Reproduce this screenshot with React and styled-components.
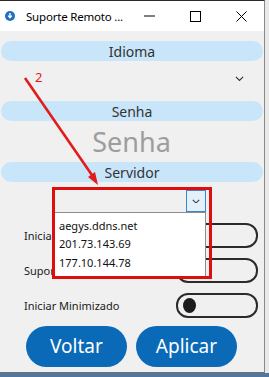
import styled, { createGlobalStyle } from "styled-components";

const GlobalStyle = createGlobalStyle`
  html, body {
    margin: 0;
    padding: 0;
    background: #dcdcdc;
  }
  * {
    box-sizing: border-box;
  }
`;

const servers = ["aegys.ddns.net", "201.73.143.69", "177.10.144.78"];

const toggles = [
  { label: "Iniciar com o Windows" },
  { label: "Suporte Rápido" },
  { label: "Iniciar Minimizado" },
];

function Chevron({ size = 9 }) {
  return (
    <svg width={size} height={size * 0.6} viewBox="0 0 10 6">
      <path d="M1 1 L5 5 L9 1" fill="none" stroke="#333" strokeWidth="1.3" />
    </svg>
  );
}

export default function App() {
  return (
    <>
      <GlobalStyle />
      <Screen>
        <Desktop>
          <Window>
            <TitleBar>
              <AppIcon>
                <svg width="10" height="10" viewBox="0 0 10 10">
                  <circle cx="5" cy="5" r="5" fill="#1f6fc2" />
                  <path d="M5 2 V6.2 M3.2 4.6 L5 6.6 L6.8 4.6" stroke="#fff" strokeWidth="1.4" fill="none" />
                </svg>
              </AppIcon>
              <Title>Suporte Remoto ...</Title>
              <WindowButtons>
                <CaptionButton>
                  <svg width="11" height="10" viewBox="0 0 11 10">
                    <path d="M0 5 H11" stroke="#000" strokeWidth="1" />
                  </svg>
                </CaptionButton>
                <CaptionButton>
                  <svg width="11" height="11" viewBox="0 0 11 11">
                    <rect x="0.5" y="0.5" width="10" height="10" fill="none" stroke="#000" strokeWidth="1" />
                  </svg>
                </CaptionButton>
                <CaptionButton>
                  <svg width="11" height="11" viewBox="0 0 11 11">
                    <path d="M0.5 0.5 L10.5 10.5 M10.5 0.5 L0.5 10.5" stroke="#000" strokeWidth="1" />
                  </svg>
                </CaptionButton>
              </WindowButtons>
            </TitleBar>

            <Content>
              <SectionPill>Idioma</SectionPill>
              <LanguageRow>
                <Chevron />
              </LanguageRow>

              <SectionPill>Senha</SectionPill>
              <PasswordHint>Senha</PasswordHint>

              <SectionPill>Servidor</SectionPill>
              <ServerRow>
                <Combo>
                  <ComboButton>
                    <Chevron size={8} />
                  </ComboButton>
                </Combo>
                <ComboList>
                  {servers.map((s) => (
                    <ComboItem key={s}>{s}</ComboItem>
                  ))}
                </ComboList>
                <Highlight />
              </ServerRow>

              <ToggleList>
                {toggles.map((t) => (
                  <ToggleRow key={t.label}>
                    <ToggleLabel>{t.label}</ToggleLabel>
                    <Toggle>
                      <Knob />
                    </Toggle>
                  </ToggleRow>
                ))}
              </ToggleList>

              <ButtonRow>
                <PrimaryButton>Voltar</PrimaryButton>
                <PrimaryButton>Aplicar</PrimaryButton>
              </ButtonRow>
            </Content>
          </Window>
          <SideStrip />
        </Desktop>
        <Taskbar />

        <Annotation>
          <svg width="269" height="377" viewBox="0 0 269 377">
            <line x1="25" y1="78" x2="94" y2="178" stroke="#e21b1b" strokeWidth="2.6" />
            <path d="M98 185 L88 177 L95 172 Z" fill="#e21b1b" />
          </svg>
          <StepNumber>2</StepNumber>
        </Annotation>
      </Screen>
    </>
  );
}

const Screen = styled.div`
  position: relative;
  width: 269px;
  height: 377px;
  overflow: hidden;
  display: flex;
  flex-direction: column;
  font-family: "Noto Sans", "Open Sans", sans-serif;
`;

const Desktop = styled.div`
  display: flex;
  height: 373px;
`;

const Window = styled.div`
  width: 265px;
  height: 373px;
  background: #f0f0f0;
  border-top: 1px solid #2a2a2a;
  border-right: 1px solid #8a8a8a;
  border-bottom: 1px solid #6f6f6f;
  display: flex;
  flex-direction: column;
`;

const SideStrip = styled.div`
  flex: 1;
  background: #e9e9e9;
`;

const Taskbar = styled.div`
  flex: 1;
  background: #52779e;
`;

const TitleBar = styled.div`
  height: 30px;
  background: #fff;
  display: flex;
  align-items: center;
  padding-left: 5px;
`;

const AppIcon = styled.div`
  display: flex;
  width: 10px;
  height: 10px;
  margin-right: 11px;
`;

const Title = styled.span`
  font-size: 11.5px;
  letter-spacing: -0.2px;
  color: #000;
  white-space: nowrap;
`;

const WindowButtons = styled.div`
  display: flex;
  margin-left: auto;
`;

const CaptionButton = styled.div`
  width: 46px;
  height: 30px;
  display: flex;
  align-items: center;
  justify-content: center;
`;

const Content = styled.div`
  flex: 1;
  display: flex;
  flex-direction: column;
  padding: 10px 0 0 1px;
`;

const SectionPill = styled.div`
  height: 20px;
  width: 262px;
  border-radius: 10px;
  background: #c9e5f9;
  color: #333;
  font-size: 14px;
  display: flex;
  align-items: center;
  justify-content: center;
`;

const LanguageRow = styled.div`
  height: 40px;
  display: flex;
  align-items: center;
  justify-content: flex-end;
  padding: 0 20px 4px 0;
`;

const PasswordHint = styled.div`
  height: 41px;
  display: flex;
  align-items: center;
  justify-content: center;
  font-size: 27px;
  color: #9d9d9d;
  padding-right: 2px;
`;

const ServerRow = styled.div`
  position: relative;
  height: 36px;
  margin-top: 5px;
  padding: 3px 0 0 54px;
`;

const Combo = styled.div`
  width: 151px;
  height: 22px;
  display: flex;
  justify-content: flex-end;
`;

const ComboButton = styled.div`
  width: 20px;
  height: 22px;
  border: 1px solid #3f84c4;
  background: #e3effa;
  display: flex;
  align-items: center;
  justify-content: center;
`;

const ComboList = styled.div`
  position: absolute;
  left: 53px;
  top: 25px;
  width: 152px;
  background: #fff;
  border: 1px solid #8d8d8d;
  padding: 3px 0 4px 4px;
  z-index: 2;
  display: flex;
  flex-direction: column;
`;

const ComboItem = styled.div`
  height: 18.5px;
  font-size: 11px;
  color: #111;
  display: flex;
  align-items: center;
`;

const Highlight = styled.div`
  position: absolute;
  left: 51px;
  top: 0;
  width: 160px;
  height: 92px;
  border: 3px solid #e00d0d;
  z-index: 3;
`;

const ToggleList = styled.div`
  display: flex;
  flex-direction: column;
  gap: 11px;
`;

const ToggleRow = styled.div`
  height: 24px;
  display: flex;
  align-items: center;
  padding: 0 6px 0 23px;
`;

const ToggleLabel = styled.span`
  font-size: 11px;
  color: #1a1a1a;
`;

const Toggle = styled.div`
  margin-left: auto;
  width: 82px;
  height: 25px;
  border: 2px solid #2b2b2b;
  border-radius: 12px;
  display: flex;
  align-items: center;
  padding-left: 5px;
`;

const Knob = styled.div`
  width: 13px;
  height: 15px;
  border-radius: 50%;
  background: #1c1c1c;
`;

const ButtonRow = styled.div`
  display: flex;
  gap: 9px;
  margin-top: 9px;
  padding-left: 25px;
`;

const PrimaryButton = styled.button`
  width: 101px;
  height: 41px;
  border: none;
  border-radius: 21px;
  background: #0b6ab7;
  color: #fff;
  font-family: "Noto Sans", "Open Sans", sans-serif;
  font-size: 19px;
  padding: 0 0 2px;
`;

const Annotation = styled.div`
  position: absolute;
  inset: 0;
  pointer-events: none;
  z-index: 5;
  svg {
    position: absolute;
    left: 0;
    top: 0;
  }
`;

const StepNumber = styled.span`
  position: absolute;
  left: 35px;
  top: 68px;
  font-size: 13px;
  color: #e21b1b;
`;
